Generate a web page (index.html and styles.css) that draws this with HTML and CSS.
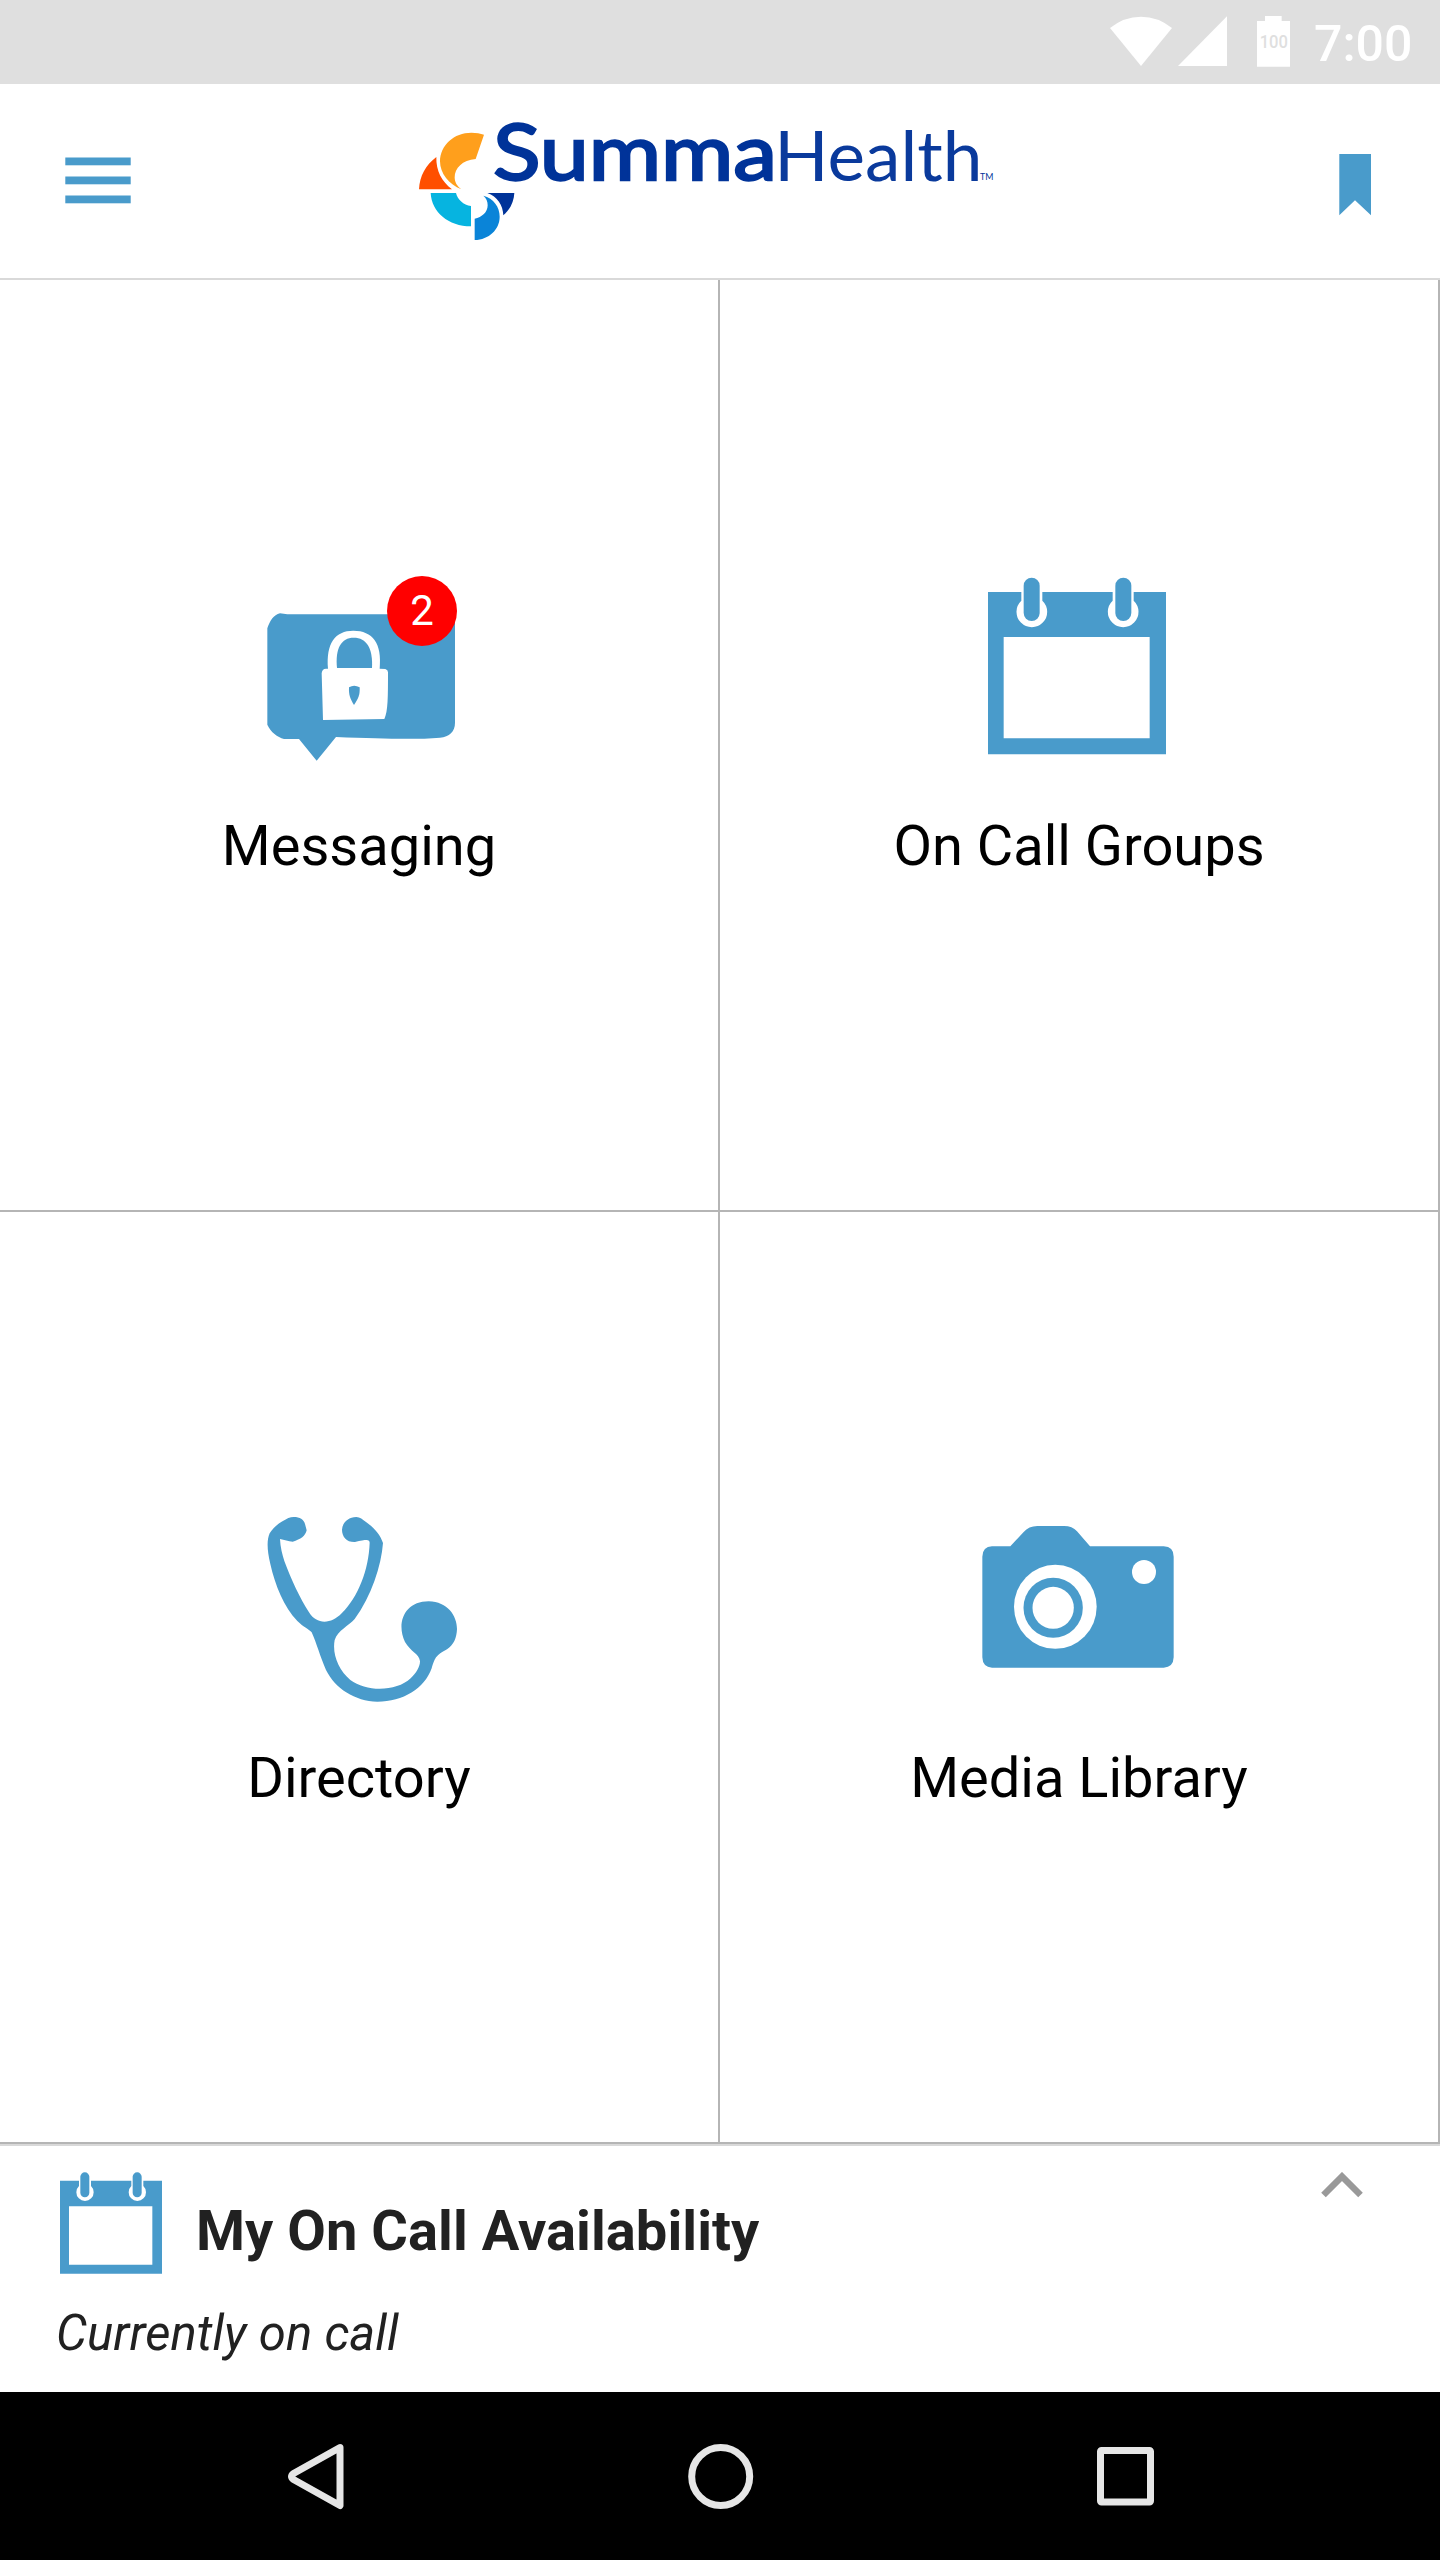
FILE: index.html
```html
<!DOCTYPE html>
<html lang="en">
<head>
    <meta charset="UTF-8">
    <meta name="viewport" content="width=device-width, initial-scale=1.0">
    <title>Summa Health</title>
    <link rel="stylesheet" href="styles.css">
</head>
<body>

<div class="status-bar">
    <svg class="status-icons" width="184" height="56" viewBox="87 42 552 168">
        <!-- Wifi -->
        <path d="M90,84 Q132,50 183,50 Q234,50 276,84 L183,198 Z"></path>
        <!-- Signal -->
        <path d="M294,198 L441,49 L441,198 Z"></path>
        <!-- Battery -->
        <path d="M531,63 L555,63 L555,48 L605,48 L605,63 L630,63 L630,200 L531,200 Z"></path>
        <text class="battery-level" x="539" y="144" textLength="85" lengthAdjust="spacingAndGlyphs">100</text>
    </svg>
    <span class="clock">7:00</span>
</div>

<header class="header">
    <svg class="menu" width="66" height="48" viewBox="0 0 66 48">
        <rect x="0.3" y="0.5" width="65.4" height="7.8"></rect>
        <rect x="0.3" y="19.5" width="65.4" height="7.8"></rect>
        <rect x="0.3" y="38.5" width="65.4" height="7.8"></rect>
    </svg>
    <svg class="logo" width="580" height="154" viewBox="57 -30 1740 462">
        <path fill="#ff9f1c" d="M255,104 L230,177 C190,180 167,205 167,232 C167,247 174,258 187,268 C150,254 123,220 123,184 C124,135 165,98 217,98 C232,98 244,100 255,104 Z"></path>
        <path fill="#ff4f00" d="M112,171 C111,213 128,244 159,268 L60,268 C62,228 80,195 112,171 Z"></path>
        <path fill="#06b4e0" d="M95,279 L171,279 C176,299 193,315 216,318 L216,379 C148,379 98,336 95,279 Z"></path>
        <path fill="#0a84d8" d="M253,287 C284,294 302,322 302,350 C302,388 270,419 227,420 L227,356 C249,352 266,337 266,316 C266,304 262,295 253,287 Z"></path>
        <path fill="#003399" d="M265,279 L346,279 C345,304 334,328 313,346 C312,316 295,289 265,279 Z"></path>
        <text class="logo-bold" x="282" y="240" textLength="852" lengthAdjust="spacingAndGlyphs">Summa</text>
        <text class="logo-light" x="1126" y="242" textLength="624" lengthAdjust="spacingAndGlyphs">Health</text>
        <text class="logo-tm" x="1743" y="241" textLength="40" lengthAdjust="spacingAndGlyphs">TM</text>
    </svg>
    <svg class="bookmark" width="32" height="62" viewBox="0 0 32 62">
        <path d="M0.3,0 L32,0 L32,61.3 L16,46.3 L0.3,61.3 Z"></path>
    </svg>
</header>

<main class="grid">
    <div class="tile">
        <div class="icon">
            <svg width="200" height="200" viewBox="177 30 600 600">
                <path d="M240,160 L262,163 L765,163 L765,488 C765,515 748,530 720,533 C650,539 560,537 408,531 L350,602 L297,537 L252,537 C232,530 213,518 202,494 L202,205 C209,184 221,164 240,160 Z"></path>
                <!-- Lock -->
                <path class="cut" d="M384,326 C378,250 405,212 460,212 C518,212 547,250 539,326 L556,327 Q564,329 564,337 C564,410 564,455 553,477 L369,480 L365,340 Q366,326 378,326 Z"></path>
                <path d="M411,324 C405,265 424,233 461,233 C500,233 519,265 516,324 Z"></path>
                <path d="M447,382 Q462,372 479,382 C480,403 476,415 462,435 C450,416 446,405 447,382 Z"></path>
            </svg>
            <span class="badge">2</span>
        </div>
        <div class="label">Messaging</div>
    </div>
    <div class="tile">
        <div class="icon">
            <svg width="200" height="200" viewBox="357 30 600 600">
                <path fill-rule="evenodd" d="M384,96 H918 V583 H384 Z M431,231 V535 H869 V231 Z"></path>
                <!-- Rings -->
                <path class="cut" d="M484,90 H547 V122 A46,46 0 1 1 484,122 Z"></path>
                <path class="cut" d="M758,90 H821 V122 A46,46 0 1 1 758,122 Z"></path>
                <rect x="491" y="53" width="48" height="130" rx="24"></rect>
                <rect x="766" y="53" width="48" height="130" rx="24"></rect>
            </svg>
        </div>
        <div class="label">On Call Groups</div>
    </div>
    <div class="tile">
        <div class="icon">
            <svg width="200" height="200" viewBox="117 36 600 600">
                <path d="M221,81 C240,81 251,88 255,102 L260,121 C256,138 243,148 218,155 C205,155 193,149 180,147 C181,172 187,194 193,213 C214,270 240,324 267,367 C290,405 334,403 365,370 C415,320 446,240 449,158 C448,148 442,148 405,156 C380,157 366,140 366,119 C367,98 384,82 409,81 C420,82 428,88 438,96 C464,115 480,133 489,159 C484,226 454,320 404,387 C386,408 354,420 344,450 C336,494 356,540 391,570 C440,607 530,605 572,565 C588,550 600,531 600,514 C597,490 572,486 555,456 C528,400 553,334 626,334 C683,335 711,378 711,417 C710,444 701,465 681,478 C645,497 645,505 635,535 C613,596 550,635 472,635 C405,634 345,595 318,540 C300,499 290,460 275,427 C268,418 250,411 232,393 C192,352 165,285 151,222 C141,180 140,150 149,130 C162,108 185,94 205,84 Q213,81 221,81 Z"></path>
            </svg>
        </div>
        <div class="label">Directory</div>
    </div>
    <div class="tile">
        <div class="icon">
            <svg width="200" height="200" viewBox="297 36 600 600">
                <path d="M336,169 L391,169 L431,126 Q446,108 472,108 L552,108 Q577,108 591,124 L630,169 L851,169 Q881,170 881,200 L881,502 Q880,532 851,533 L336,533 Q308,532 307,502 L307,200 Q308,170 336,169 Z"></path>
                <ellipse class="cut" cx="526" cy="350.500" rx="124" ry="126"></ellipse>
                <ellipse cx="519.500" cy="353.500" rx="89" ry="90"></ellipse>
                <ellipse class="cut" cx="519.500" cy="353.500" rx="62" ry="63"></ellipse>
                <circle class="cut" cx="792" cy="246" r="36"></circle>
            </svg>
        </div>
        <div class="label">Media Library</div>
    </div>
</main>

<section class="availability">
    <div class="availability-head">
        <svg width="104" height="104" viewBox="180 157 312 312">
            <path fill-rule="evenodd" d="M180,183 H486 V462 H180 Z M207,260 V435 H457 V260 Z"></path>
            <path class="cut" d="M237,180 H273 V199 A26,26 0 1 1 237,199 Z"></path>
            <path class="cut" d="M394,180 H430 V199 A26,26 0 1 1 394,199 Z"></path>
            <rect x="241" y="158" width="27" height="75" rx="13.500"></rect>
            <rect x="398" y="158" width="27" height="75" rx="13.500"></rect>
        </svg>
        <h2 class="availability-title">My On Call Availability</h2>
        <svg class="chevron" width="42" height="26" viewBox="0 0 42 26">
            <path d="M2.500,23 L21,4.500 L39.500,23"></path>
        </svg>
    </div>
    <div class="availability-state">Currently on call</div>
</section>

<nav class="nav-bar">
    <svg width="66" height="66" viewBox="0 0 66 66">
        <path d="M56,3.500 L9.500,29.500 Q5.500,32.500 9.500,35.500 L56,61.500 Z"></path>
    </svg>
    <svg width="66" height="66" viewBox="0 0 66 66">
        <circle cx="32.700" cy="32.500" r="29"></circle>
    </svg>
    <svg width="66" height="66" viewBox="0 0 66 66">
        <rect x="8.500" y="6.500" width="50" height="51.500" rx="1"></rect>
    </svg>
</nav>

</body>
</html>
```
FILE: styles.css
```css
body {
    display: flex;
    flex-direction: column;
    width: 1440px;
    height: 2560px;
    margin: 0;
    background-color: #fff;
    font-family: Roboto, sans-serif;
    color: #000;
}
svg {
    display: block;
    flex-shrink: 0;
    fill: #499bcb; /* Brand blue */
}
.cut {
    fill: #fff;
}

/* Status bar */
.status-bar {
    display: flex;
    justify-content: flex-end;
    box-sizing: border-box;
    height: 84px;
    padding: 14px 28px 0 0;
    background-color: #dfdfdf;
}
.status-icons {
    fill: #fff;
}
.battery-level {
    font-size: 57px;
    font-weight: 500;
    fill: #dfdfdf;
}
.clock {
    width: 98px;
    margin-left: 21px;
    font-size: 50px;
    font-weight: 500;
    line-height: 60px;
    white-space: nowrap;
    color: #fff;
}

/* Header */
.header {
    display: flex;
    align-items: flex-start;
    justify-content: space-between;
    box-sizing: border-box;
    height: 196px;
    padding: 0 69px 0 65px;
    border-bottom: 2px solid #d9d9d9;
}
.menu {
    margin-top: 73px;
}
.logo {
    margin: 6px 54px 0 0;
}
.bookmark {
    margin-top: 70px;
}
.logo-bold {
    font-family: Lato, sans-serif;
    font-size: 232px;
    fill: #003399;
    stroke: #003399;
    stroke-width: 7;
}
.logo-light {
    font-family: Lato, sans-serif;
    font-size: 211px;
    fill: #0a3a9c;
}
.logo-tm {
    font-family: Lato, sans-serif;
    font-size: 26px;
    fill: #003399;
}

/* Tiles */
.grid {
    display: grid;
    grid-template-columns: 720px 720px;
    grid-template-rows: 932px 932px;
}
.tile {
    display: flex;
    flex-direction: column;
    align-items: center;
    gap: 43px;
    box-sizing: border-box;
    padding-top: 290px;
    border-right: 2px solid #b5b5b5;
    border-bottom: 2px solid #b5b5b5;
}
.icon {
    position: relative;
}
.badge {
    position: absolute;
    top: 6px;
    left: 128px;
    width: 70px;
    height: 70px;
    border-radius: 50%;
    background-color: #f00;
    color: #fff;
    font-size: 42px;
    line-height: 70px;
    text-align: center;
}
.label {
    font-size: 56px;
    line-height: 66px;
}

/* On call availability */
.availability {
    box-sizing: border-box;
    height: 248px;
    padding: 26px 77px 0 60px;
    border-top: 2px solid #d9d9d9;
    color: #212121;
}
.availability-head {
    display: flex;
    align-items: flex-start;
}
.availability-title {
    flex: 1;
    margin: 26px 0 0 32px;
    font-size: 56px;
    font-weight: 700;
    line-height: 66px;
    letter-spacing: 0.05px;
}
.availability-state {
    margin: 29px 0 0 -4px;
    font-size: 49px;
    font-style: italic;
    line-height: 58px;
    letter-spacing: 0.08px;
}
.chevron {
    fill: none;
    stroke: #999;
    stroke-width: 6.5;
}

/* Navigation bar */
.nav-bar {
    display: flex;
    justify-content: space-between;
    box-sizing: border-box;
    height: 168px;
    padding: 52px 282px 0 284px;
    background-color: #000;
}
.nav-bar svg {
    fill: none;
    stroke: #e6e6e6;
    stroke-width: 7;
    stroke-linejoin: round;
}
```
